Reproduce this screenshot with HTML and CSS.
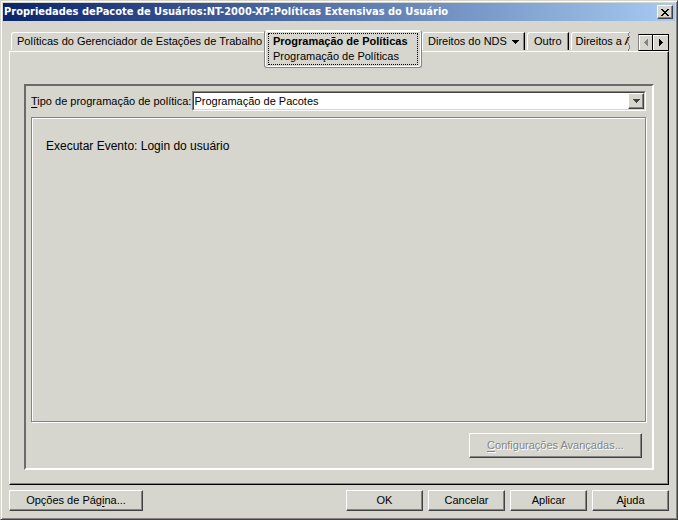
FILE: index.html
```html
<!DOCTYPE html>
<html lang="pt-BR">
<head>
<meta charset="utf-8">
<title>Propriedades de Pacote de Usuários</title>
<link rel="stylesheet" href="styles.css">
</head>
<body>
<main class="window">
  <header class="titlebar">
    <h1 class="title">Propriedades dePacote de Usuários:NT-2000-XP:Políticas Extensivas do Usuário</h1>
    <button class="close" type="button" aria-label="Fechar">
      <svg width="8" height="7" viewBox="0 0 8 7" shape-rendering="crispEdges"><path d="M0 0h2v1h1v1h2v-1h1v-1h2v1h-1v1h-1v1h-1v1h1v1h1v1h1v1h-2v-1h-1v-1h-2v1h-1v1h-2v-1h1v-1h1v-1h1v-1h-1v-1h-1v-1h-1z"/></svg>
    </button>
  </header>
  <div class="body">
    <nav class="tabs" role="tablist">
      <button class="tab first" type="button" role="tab">Políticas do Gerenciador de Estações de Trabalho</button>
      <button class="tab active" type="button" role="tab" aria-selected="true">
        <span class="focus"><strong>Programação de Políticas</strong><span>Programação de Políticas</span></span>
      </button>
      <button class="tab shaded menu" type="button" role="tab">Direitos do NDS
        <svg width="7" height="4" viewBox="0 0 7 4" shape-rendering="crispEdges"><path d="M0 0h7v1h-1v1h-1v1h-1v1h-1v-1h-1v-1h-1v-1h-1z"/></svg>
      </button>
      <button class="tab shaded" type="button" role="tab">Outro</button>
      <button class="tab cut" type="button" role="tab"><span class="cut-text">Direitos a A</span>
        <svg class="tear" width="4" height="19" viewBox="0 0 4 19" shape-rendering="crispEdges"><path class="tear-fill" d="M2 0h2v19h-2v-3h1v-3h-1v-2h-2v-2h1v-3h1v-3h-1v-2z"/><path class="tear-line" d="M2.500 0v1M1.500 1v3M2.500 4v2M1.500 6v3M.5 9v2M1.500 11v2M2.500 13v4M1.500 17v2"/></svg>
      </button>
      <div class="scroll">
        <button class="arrow" type="button" aria-label="Anterior" disabled><svg width="4" height="7" viewBox="0 0 4 7" shape-rendering="crispEdges"><path d="M3 0h1v7h-1v-1h-1v-1h-1v-1h-1v-1h1v-1h1v-1h1z"/></svg></button>
        <button class="arrow" type="button" aria-label="Próximo"><svg width="4" height="7" viewBox="0 0 4 7" shape-rendering="crispEdges"><path d="M0 0h1v1h1v1h1v1h1v1h-1v1h-1v1h-1v1h-1z"/></svg></button>
      </div>
    </nav>
    <section class="page" role="tabpanel">
      <div class="frame">
        <div class="field">
          <label for="tipo"><u>T</u>ipo de programação de política:</label>
          <div class="combo">
            <select id="tipo"><option>Programação de Pacotes</option></select>
            <span class="drop"><svg width="7" height="4" viewBox="0 0 7 4" shape-rendering="crispEdges"><path d="M0 0h7v1h-1v1h-1v1h-1v1h-1v-1h-1v-1h-1v-1h-1z"/></svg></span>
          </div>
        </div>
        <div class="details">Executar Evento: Login do usuário</div>
        <button class="button advanced" type="button" disabled><u>C</u>onfigurações Avançadas...</button>
      </div>
    </section>
    <footer class="actions">
      <button class="button options" type="button">Opções de Pág<u>i</u>na...</button>
      <button class="button" type="button">OK</button>
      <button class="button" type="button">Cancelar</button>
      <button class="button" type="button">Aplicar</button>
      <button class="button" type="button">A<u>j</u>uda</button>
    </footer>
  </div>
</main>
</body>
</html>
```
FILE: styles.css
```css
:root {
  --face: #d6d6ce;
  --mid: #848484;
  --dark: #424242;
}

* { box-sizing: border-box; }

body {
  margin: 0;
  background: var(--face);
  color: #000;
  font: 11px/13px "Liberation Sans", Arial, sans-serif;
}

button, select {
  margin: 0;
  padding: 0;
  border: 0;
  border-radius: 0;
  background: var(--face);
  color: inherit;
  font: inherit;
}

svg { display: block; flex: none; }
u { text-underline-offset: 2px; }

.window {
  display: flex;
  flex-direction: column;
  min-height: 100vh;
  padding: 1px;
  border: 1px solid;
  border-color: var(--face) var(--dark) var(--dark) var(--face);
  box-shadow: inset 1px 1px #fff, inset -1px -1px var(--mid);
}

.titlebar {
  display: flex;
  align-items: center;
  justify-content: space-between;
  height: 18px;
  margin: 1px;
  padding: 0 2px 0 1px;
  background: linear-gradient(90deg, #0a246a, #a6caf0);
}

.title {
  margin: 0;
  color: #fff;
  font: bold 11px/18px "DejaVu Sans Condensed", Tahoma, sans-serif;
  white-space: nowrap;
}

.close {
  display: flex;
  align-items: center;
  justify-content: center;
  width: 16px;
  height: 14px;
  border: 1px solid;
  border-color: #fff var(--dark) var(--dark) #fff;
  box-shadow: inset -1px -1px var(--mid);
}

.body {
  display: flex;
  flex: 1;
  flex-direction: column;
  padding: 8px 7px 7px;
}

.tabs {
  display: flex;
  align-items: flex-start;
  height: 21px;
  padding-left: 2px;
}

.tab {
  flex: none;
  height: 18px;
  margin-top: 2px;
  padding: 0 6px;
  border: solid #fff;
  border-width: 1px 0 0 1px;
  border-top-left-radius: 3px;
  white-space: nowrap;
}

.first { width: 253px; padding: 0 5px; text-align: left; }

.shaded {
  margin-right: 2px;
  border-right: 1px solid #000;
  box-shadow: inset -1px 0 var(--mid);
}

.menu {
  display: flex;
  align-items: center;
  gap: 5px;
  width: 103px;
  padding: 0 5px;
}

.active {
  position: relative;
  z-index: 1;
  width: 158px;
  height: 38px;
  margin-top: 0;
  padding: 2px 3px;
  border: 1px solid #fff;
  border-right-color: var(--mid);
  border-left-color: var(--mid);
  border-bottom-color: var(--mid);
  border-radius: 3px;
  box-shadow: inset 1px 1px #fff, inset -1px -1px #fff;
}

.focus {
  display: flex;
  flex-direction: column;
  height: 32px;
  padding: 0 4px;
  border: 1px dotted #000;
  line-height: 15px;
  text-align: left;
}

.cut {
  display: flex;
  width: 60px;
  padding: 0;
  position: relative;
}

.cut-text {
  flex: 1;
  overflow: hidden;
  padding-left: 4px;
  line-height: 17px;
  text-align: left;
}

.tear { position: absolute; top: -1px; right: 0; }
.tear-fill { fill: var(--face); }
.tear-line { fill: none; stroke: var(--mid); }

.scroll {
  display: flex;
  margin-top: 4px;
  margin-left: auto;
}

.arrow {
  display: flex;
  align-items: center;
  justify-content: center;
  width: 16px;
  height: 17px;
  border: 1px solid #000;
  border-left-width: 0;
  box-shadow: inset 1px 1px #fff;
}

.arrow:first-child { width: 15px; border-left: 1px solid var(--mid); }
.arrow:disabled { fill: var(--mid); }

.page {
  display: flex;
  flex: 1;
  flex-direction: column;
  padding: 32px 14px 14px;
  border: 1px solid;
  border-color: #fff #000 #000 #fff;
  box-shadow: inset -1px -1px var(--mid);
}

.frame {
  display: flex;
  flex: 1;
  flex-direction: column;
  padding: 5px 6px 10px 5px;
  border: 2px solid;
  border-color: #6b6b6b #fff #fff #6b6b6b;
}

.field {
  display: flex;
  align-items: center;
  gap: 1px;
}

.combo {
  position: relative;
  flex: 1;
  border: 1px solid;
  border-color: var(--mid) #fff #fff var(--mid);
}

.combo select {
  display: block;
  width: 100%;
  height: 18px;
  border: 1px solid;
  border-color: var(--dark) var(--face) var(--face) var(--dark);
  background: #fff;
  appearance: none;
}

.drop {
  position: absolute;
  top: 1px;
  right: 1px;
  display: flex;
  align-items: center;
  justify-content: center;
  width: 16px;
  height: 16px;
  border: 1px solid;
  border-color: #fff var(--dark) var(--dark) #fff;
  background: var(--face);
  box-shadow: inset -1px -1px var(--mid);
  fill: var(--dark);
  pointer-events: none;
}

.details {
  flex: 1;
  margin-top: 6px;
  padding: 21px 14px;
  border: 1px solid var(--mid);
  box-shadow: inset 1px 1px #fff, 1px 1px #fff;
  font-size: 12px;
  line-height: 14px;
}

.button {
  width: 77px;
  height: 21px;
  border: 1px solid;
  border-color: #fff var(--dark) var(--dark) #fff;
  box-shadow: inset -1px -1px var(--mid);
}

.advanced {
  align-self: flex-end;
  width: 173px;
  height: 25px;
  margin-top: 11px;
  margin-right: 4px;
  color: var(--mid);
  text-shadow: 1px 1px #fff;
}

.actions {
  display: flex;
  gap: 5px;
  margin-top: 5px;
}

.options { width: 134px; margin-right: auto; }
```
